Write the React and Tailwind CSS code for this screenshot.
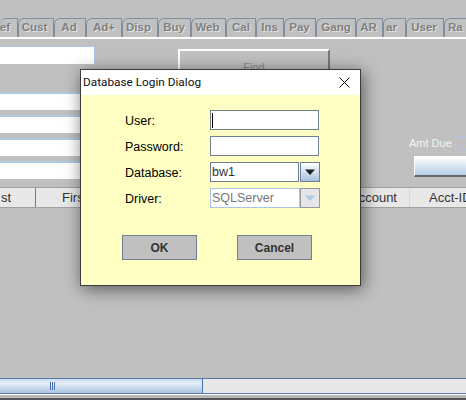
const tabs = [
	["ef", "w-[18px] border-l-0 rounded-none justify-end pr-[7px]"],
	["Cust", "w-[36px] pr-[3px] justify-center"],
	["Ad", "w-[32px] pr-[2px] justify-center"],
	["Ad+", "w-[36px] justify-center"],
	["Disp", "w-[36px] pr-[3px] justify-center"],
	["Buy", "w-[33px] pr-[1px] justify-center"],
	["Web", "w-[35px] pr-[2px] justify-center"],
	["Cal", "w-[30px] justify-center"],
	["Ins", "w-[28px] pr-[1px] justify-center"],
	["Pay", "w-[32px] pr-[1px] justify-center"],
	["Gang", "w-[40px] justify-center"],
	["AR", "w-[27px] pr-[2px] justify-center"],
	["ar", "w-[23px] pr-[6px] justify-center"],
	["User", "w-[38px] pr-[2px] justify-center"],
	["Ra", "w-[30px] pl-[3px] justify-start"],
];

const Arrow = ({ color }) => (
	<svg width="12" height="7" viewBox="0 0 12 7">
		<path d="M1 0.5h10L6 6z" fill={color} />
	</svg>
);

const BackField = () => (
	<div className="h-[18px] w-[100px] bg-white border-t-2 border-[#b0c8e4]" />
);

const Row = ({ label, children }) => (
	<div className="flex items-center h-5">
		<div className="w-[85px] pt-[2px] text-[12.5px] leading-none text-black">{label}</div>
		{children}
	</div>
);

const App = () => {
	return (
		<div
			className="relative w-[466px] h-[400px] overflow-hidden flex flex-col bg-[#c0c0c0] font-['Liberation_Sans',Arial,sans-serif]"
		>
			{/* Tab strip */}
			<div className="flex items-end h-[39px] border-b-2 border-white overflow-hidden shrink-0">
				{tabs.map(([name, style]) => (
					<div
						key={name}
						className={`${style} shrink-0 h-[19px] flex items-center border-t border-l border-r border-[#7f8f9f] rounded-tl-[6px] text-[11.5px] font-bold text-[#808080] [text-shadow:1px_1px_0_#e4e4e4]`}
					>
						{name}
					</div>
				))}
			</div>

			{/* Top row */}
			<div className="flex items-start h-[53px] shrink-0 pt-[7px]">
				<div className="h-[18px] w-[95px] bg-white border-t border-[#a9c8ea] border-r" />
				<div className="ml-[83px] mt-[3px] w-[152px] h-[34px] flex items-center justify-center border-t-2 border-l-2 border-white border-r-2 border-r-[#777] text-[11px] text-[#8a8a8a]">
					Find
				</div>
			</div>

			{/* Fields and amount */}
			<div className="flex justify-between h-[95px] shrink-0">
				<div className="flex flex-col gap-[5px]">
					<BackField />
					<BackField />
					<BackField />
					<BackField />
				</div>
				<div className="w-[52px] pt-[44px]">
					<div className="flex justify-between items-center h-[14px] -ml-[5px]">
						<span className="text-[11px] leading-none text-[#f4f4f4] whitespace-nowrap">Amt Due</span>
						<div className="w-[11px] h-[14px] border-l border-y border-[#b0c8e4]" />
					</div>
					<div className="mt-[6px] h-[21px] bg-gradient-to-b from-white to-[#b6cde6] border-t border-l border-white border-b-2 border-b-[#666]" />
				</div>
			</div>

			{/* Table header */}
			<div className="flex h-[21px] shrink-0 text-[13px] text-[#333] bg-[#e8e8e8] border-y border-[#a0a0a0]">
				<div className="w-[36px] pl-[1px] border-r border-[#6f7f8f]">st</div>
				<div className="w-[76px] pl-[26px] border-r border-[#6f7f8f]">First</div>
				<div className="w-[224px] border-r border-[#6f7f8f]" />
				<div className="w-[74px] pl-[14px] border-r border-[#d8d8d8]">Account</div>
				<div className="flex-1 pl-[19px] whitespace-nowrap overflow-hidden">Acct-ID</div>
			</div>

			{/* Horizontal scrollbar */}
			<div className="mt-[170px] flex h-[16px] shrink-0 border-y border-[#5b78a8] bg-[#e8e8e8]">
				<div className="w-[203px] h-full flex items-center gap-px pl-[50px] bg-gradient-to-b from-[#c8dcf0] via-[#e4eef9] via-30% to-[#a9c4e0] border-r border-[#4f73b0]">
					<div className="w-px h-[8px] bg-[#4f73b0]" />
					<div className="w-px h-[8px] bg-[#4f73b0]" />
					<div className="w-px h-[8px] bg-[#4f73b0]" />
				</div>
			</div>
			<div className="flex-1 border-t border-white border-b-2 border-b-[#555] bg-[#b8b8b8]" />

			{/* Login dialog */}
			<div className="absolute left-[80px] top-[69px] w-[281px] h-[217px] flex flex-col border border-[#3c3c3c] shadow-[2px_3px_16px_rgba(0,0,0,0.55)]">
				<div className="h-[25px] shrink-0 flex items-center justify-between pl-[2px] pr-[10px] bg-white text-[11.8px] text-[#111] font-['Roboto',sans-serif]">
					<span>Database Login Dialog</span>
					<svg width="11" height="11" viewBox="0 0 11 11" stroke="#111" strokeWidth="1">
						<path d="M0.5 0.5l10 10M10.5 0.5l-10 10" />
					</svg>
				</div>
				<div className="flex-1 flex flex-col bg-[#ffffc4] pt-[15px] pl-[44px]">
					<div className="flex flex-col gap-[6px]">
						<Row label="User:">
							<div className="w-[109px] h-5 flex items-center pl-[1px] bg-white border border-[#6f7f93]">
								<div className="w-px h-[15px] bg-black" />
							</div>
						</Row>
						<Row label="Password:">
							<div className="w-[109px] h-5 bg-white border border-[#6f7f93]" />
						</Row>
						<Row label="Database:">
							<div className="w-[89px] h-5 flex items-center pl-[1px] bg-white border border-[#6f7f93] text-[12.5px] text-[#333]">
								bw1
							</div>
							<div className="ml-[1px] w-5 h-5 flex items-center justify-center bg-gradient-to-b from-white to-[#a9c2de] border border-[#6f7f93]">
								<Arrow color="#222" />
							</div>
						</Row>
						<Row label="Driver:">
							<div className="w-[90px] h-5 flex items-center pl-[1px] bg-white border border-[#a9c4e4] text-[12.5px] text-[#777]">
								SQLServer
							</div>
							<div className="w-5 h-5 flex items-center justify-center bg-[#e6e6e6] border border-[#8f9aa5]">
								<Arrow color="#a8c8ec" />
							</div>
						</Row>
					</div>
					<div className="mt-[27px] -ml-[3px] flex gap-[40px] text-xs font-bold text-[#333]">
						<div className="w-[75px] h-[25px] flex items-center justify-center bg-[#c0c0c0] border border-[#6f7f93]">OK</div>
						<div className="w-[75px] h-[25px] flex items-center justify-center bg-[#c0c0c0] border border-[#6f7f93]">Cancel</div>
					</div>
				</div>
			</div>
		</div>
	);
};

export default App;
